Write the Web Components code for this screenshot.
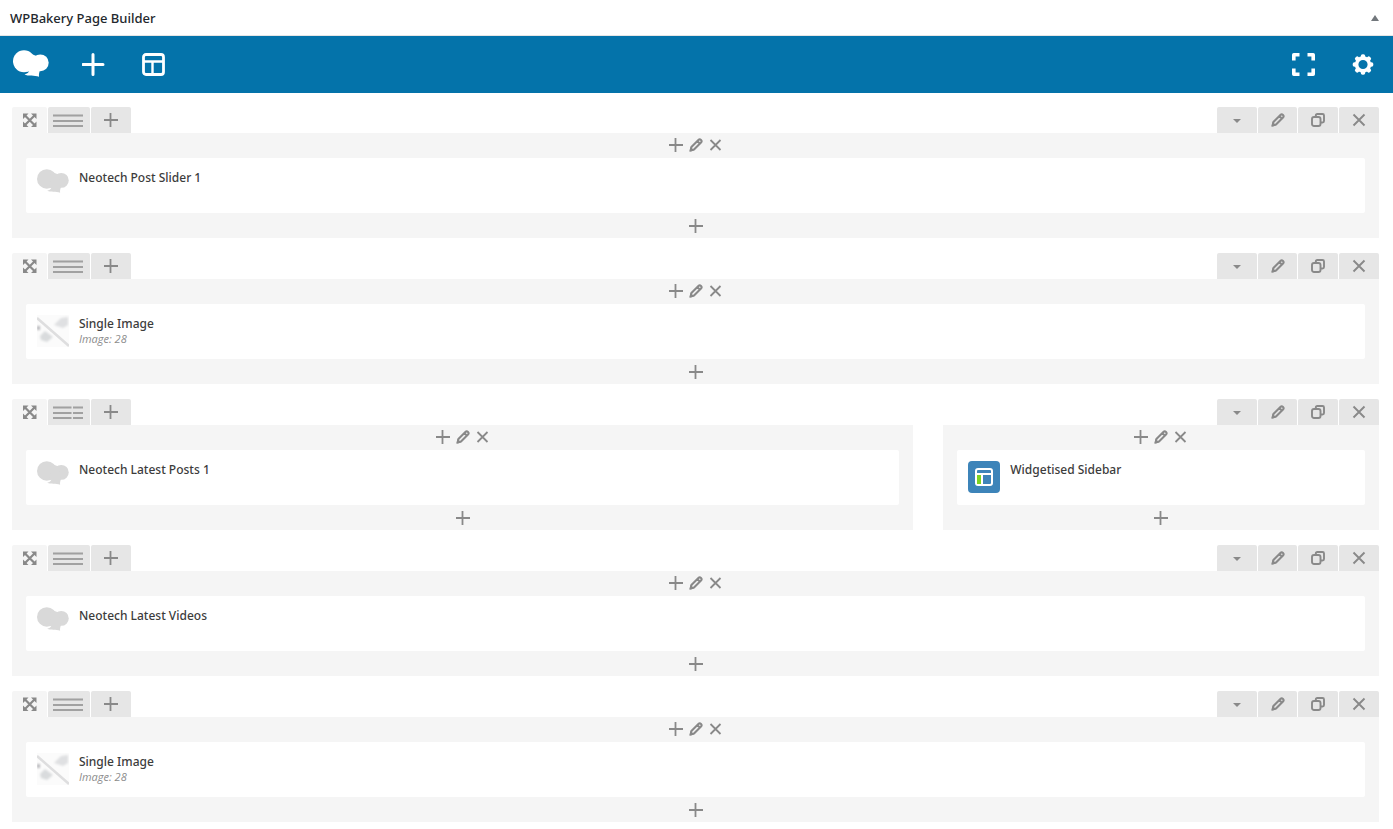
<!DOCTYPE html>
<html lang="en">
<head>
<meta charset="utf-8">
<title>WPBakery Page Builder</title>
<style>
body { margin: 0; background: #fff; color: #3c3c3c; font: 500 13px/20px "Noto Sans", "Open Sans", sans-serif; }
</style>
</head>
<body>
<builder-panel heading="WPBakery Page Builder">
  <builder-row>
    <builder-column><builder-element icon="logo">Neotech Post Slider 1</builder-element></builder-column>
  </builder-row>
  <builder-row>
    <builder-column><builder-element icon="image">Single Image<span slot="detail">Image: 28</span></builder-element></builder-column>
  </builder-row>
  <builder-row layout="split">
    <builder-column span="2"><builder-element icon="logo">Neotech Latest Posts 1</builder-element></builder-column>
    <builder-column span="1"><builder-element icon="sidebar">Widgetised Sidebar</builder-element></builder-column>
  </builder-row>
  <builder-row>
    <builder-column><builder-element icon="logo">Neotech Latest Videos</builder-element></builder-column>
  </builder-row>
  <builder-row>
    <builder-column><builder-element icon="image">Single Image<span slot="detail">Image: 28</span></builder-element></builder-column>
  </builder-row>
</builder-panel>

<script>
const stroke = (w, d, extra = '') => `<path d="${d}" fill="none" stroke="currentColor" stroke-width="${w}" ${extra}/>`;
const gear = (() => {
  let teeth = '';
  for (let i = 0; i < 8; i++) teeth += `<rect x="8.8" y="1.200" width="4.400" height="5" rx="1.800" transform="rotate(${i * 45} 11 11.500)"/>`;
  return `<g fill="currentColor">${teeth}</g><circle cx="11" cy="11.500" r="6.400" fill="none" stroke="currentColor" stroke-width="3.600"/>`;
})();

const ICONS = {
  logo: [36, 27, `<g fill="currentColor"><circle cx="11" cy="11.200" r="11"/><circle cx="27.300" cy="12.800" r="8.400"/><path d="M16 3L23.500 6L27 20.500L14 21.500Z"/><path d="M11.500 24.300C14 24 16 22.500 16.500 20L27.500 19.500C26.300 22 25.700 24 26 26.800C21.500 25 15 26.800 11.500 24.300Z"/></g>`],
  addBig: [23, 23, stroke(3, 'M11 1.500V21.500M1 11.500H21', 'stroke-linecap="round"')],
  template: [23, 23, `<rect x="1.500" y="1.500" width="20" height="20" rx="2.500" fill="none" stroke="currentColor" stroke-width="2.800"/>` + stroke(2.4, 'M2 8.500H21M10.500 8.500V21')],
  fullscreen: [23, 23, stroke(3.6, 'M1.800 7.500V1.800H7.500M15.500 1.800H21.200V7.500M21.200 15.500V21.200H15.500M7.500 21.200H1.800V15.500', 'stroke-linejoin="round"')],
  gear: [23, 23, gear],
  move: [14, 14, stroke(2.2, 'M2 2.500L11.500 12M11.500 2.500L2 12') + '<path fill="currentColor" d="M0 .5H5.500L0 6ZM8 .5H13.500V6ZM13.500 8.500V14H8ZM5.500 14H0V8.500Z"/>'],
  full: [30, 16, stroke(2, 'M0 3.500H30M0 9H30M0 14H30', 'opacity=".75"')],
  split: [30, 16, stroke(2, 'M0 3.500H18.500M20 3.500H30M0 9H18.500M20 9H30M0 14H18.500M20 14H30', 'opacity=".75"')],
  add: [14, 14, stroke(1.8, 'M6.500 0V14M0 7H14')],
  caret: [14, 14, '<path fill="currentColor" d="M3 6H11L7 10Z"/>'],
  pencil: [14, 14, stroke(2.1, 'M1.700 12.500L2.400 9L9.400 2Q10.700 .7 12 2Q13.300 3.300 12 4.600L5 11.600ZM8.300 3.100L10.900 5.700', 'stroke-linejoin="round"') + '<path fill="currentColor" d="M.3 13.800L1.600 9L5 12.400Z"/>'],
  copy: [14, 14, `<rect x="1" y="4" width="8.500" height="9" rx="2" fill="none" stroke="currentColor" stroke-width="1.900"/>` + stroke(1.9, 'M4.800 3.500V2.500Q4.800 1 6.300 1H11.500Q13 1 13 2.500V8Q13 9.500 11.500 9.500H10')],
  close: [14, 14, stroke(1.9, 'M1.500 1.500L12.500 12.500M12.500 1.500L1.500 12.500')],
  closeSmall: [14, 14, stroke(1.8, 'M1.500 2L11.500 12M11.500 2L1.500 12')],
  toggle: [8, 6, '<path fill="currentColor" d="M4 0L8 6H0Z"/>'],
  image: [32, 32, `<rect width="32" height="32" fill="#fbfbfb"/><defs><filter id="soft"><feGaussianBlur stdDeviation=".8"/></filter></defs><path d="M0 3L32 31" stroke="#dededf" stroke-width="2.500"/><g filter="url(#soft)"><path d="M17 10L24 3L31 2V10L26 13Z" fill="#dfe0e2"/><path d="M3 21L8 16L16 22L10 27L4 25Z" fill="#d9dbdd"/><path d="M0 11H3V15H0Z" fill="#b5b5b9"/></g>`],
  sidebar: [32, 32, `<rect width="32" height="32" rx="4" fill="#3d84b9"/><rect x="8" y="8" width="16" height="16" rx="2" fill="none" stroke="#fff" stroke-width="2"/><path d="M9 14H13V23H9Z" fill="#7ed321"/><path d="M8 13H24M14 13V24" stroke="#fff" stroke-width="2"/>`]
};
const icon = (name, width) => {
  const [w, h, body] = ICONS[name];
  const shown = width || w;
  return `<svg width="${shown}" height="${Math.round(shown * h / w)}" viewBox="0 0 ${w} ${h}" aria-hidden="true">${body}</svg>`;
};
const button = (name, label, cls = '') => `<button type="button" class="${cls}" aria-label="${label}" title="${label}">${icon(name)}</button>`;
const RESET = `
  * { box-sizing: border-box; }
  button { display: flex; align-items: center; justify-content: center; margin: 0; padding: 0; border: 0; background: none; color: inherit; font: inherit; cursor: pointer; }
  svg { display: block; flex: none; }`;

class BuilderPanel extends HTMLElement {
  connectedCallback() {
    this.attachShadow({ mode: 'open' }).innerHTML = `<style>${RESET}
      :host { display: block; }
      header { display: flex; align-items: center; justify-content: space-between; height: 36px; padding: 0 14px 0 10px; border-bottom: 1px solid #e5e5e5; }
      h2 { margin: 0; font: inherit; color: #23282d; }
      header button { color: #72777c; width: 8px; height: 20px; }
      nav { display: flex; height: 57px; background: #0473aa; color: #fff; }
      nav button { width: 60px; }
      nav a { display: flex; align-items: center; width: 63px; padding: 0 0 2px 13px; color: inherit; }
      .end { margin-left: auto; }
      main { display: flex; flex-direction: column; gap: 15px; padding: 14px 14px 7px 12px; }
    </style>
    <header><h2>${this.getAttribute('heading')}</h2>${button('toggle', 'Toggle panel')}</header>
    <nav aria-label="Builder tools">
      <a href="#" aria-label="Page builder home">${icon('logo')}</a>
      ${button('addBig', 'Add new element')}${button('template', 'Templates')}
      ${button('fullscreen', 'Full screen', 'end')}${button('gear', 'Page settings')}
    </nav>
    <main><slot></slot></main>`;
  }
}

class BuilderRow extends HTMLElement {
  connectedCallback() {
    this.attachShadow({ mode: 'open' }).innerHTML = `<style>${RESET}
      :host { display: block; }
      .tabs { display: flex; gap: 1px; height: 26px; color: #898989; }
      .tabs button { width: 40px; background: #e6e6e6; border-radius: 2px 2px 0 0; }
      .tabs .move { width: 35px; background: #f5f5f5; }
      .tabs .layout { width: 42px; padding-right: 2px; }
      .tabs .edit { width: 39px; }
      .end { margin-left: auto; }
      .columns { display: grid; grid-template-columns: repeat(3, minmax(0, 1fr)); gap: 30px; }
    </style>
    <div class="tabs">
      ${button('move', 'Move row', 'move')}${button(this.getAttribute('layout') || 'full', 'Row layout', 'layout')}${button('add', 'Add column')}
      ${button('caret', 'Toggle row', 'end')}${button('pencil', 'Edit row', 'edit')}${button('copy', 'Clone row')}${button('close', 'Delete row')}
    </div>
    <div class="columns"><slot></slot></div>`;
  }
}

class BuilderColumn extends HTMLElement {
  connectedCallback() {
    this.attachShadow({ mode: 'open' }).innerHTML = `<style>${RESET}
      :host { display: block; grid-column: span 3; padding: 0 14px; background: #f5f5f5; color: #898989; }
      :host([span="2"]) { grid-column: span 2; }
      :host([span="1"]) { grid-column: span 1; }
      .controls { display: flex; justify-content: center; height: 25px; }
      .controls.top { padding-bottom: 1px; }
      .controls button { width: 20px; }
    </style>
    <div class="controls top">${button('add', 'Prepend element')}${button('pencil', 'Edit column')}${button('closeSmall', 'Delete column')}</div>
    <slot></slot>
    <div class="controls">${button('add', 'Append element')}</div>`;
  }
}

class BuilderElement extends HTMLElement {
  connectedCallback() {
    this.attachShadow({ mode: 'open' }).innerHTML = `<style>${RESET}
      :host { display: flex; gap: 10px; min-height: 55px; box-sizing: border-box; padding: 11px; background: #fff; border-radius: 2px; }
      .icon { width: 32px; color: #d9d9d9; }
      h4 { margin: 0; font: inherit; font-size: 12px; line-height: 18px; color: #3c3c3c; }
      .detail { font: italic 400 11px/12px "Open Sans", "Noto Sans", sans-serif; color: #8c8c8c; }
    </style>
    <div class="icon">${icon(this.getAttribute('icon'), 32)}</div>
    <div><h4><slot></slot></h4><div class="detail"><slot name="detail"></slot></div></div>`;
  }
}

customElements.define('builder-panel', BuilderPanel);
customElements.define('builder-row', BuilderRow);
customElements.define('builder-column', BuilderColumn);
customElements.define('builder-element', BuilderElement);
</script>
</body>
</html>
